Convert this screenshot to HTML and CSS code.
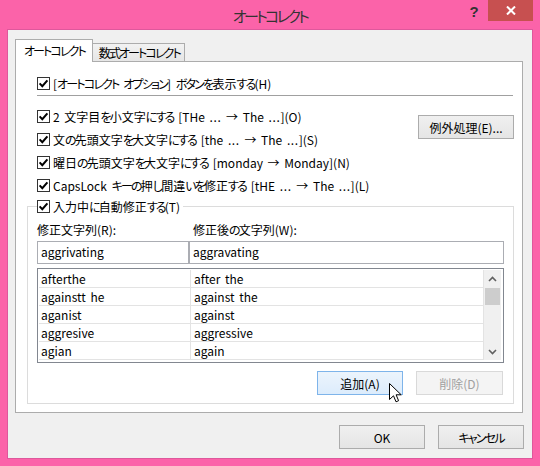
FILE: index.html
```html
<!DOCTYPE html>
<html lang="ja">
<head>
<meta charset="utf-8">
<title>オートコレクト</title>
<link rel="stylesheet" href="styles.css">
</head>
<body>
<div class="window">
  <div class="titlebar">
    <div class="title">オートコレクト</div>
    <div class="controls">
      <div class="help">?</div>
      <div class="close"><svg width="10" height="9" viewBox="0 0 10 9"><path d="M1 0.5L9 8.5M9 0.5L1 8.5" stroke="#fff" stroke-width="2"/></svg></div>
    </div>
  </div>
  <div class="client">
    <div class="tabs">
      <div class="tab active">オートコレクト</div>
      <div class="tab">数式オートコレクト</div>
    </div>
    <div class="panel">
      <div class="check-row"><span class="cb"><svg width="11" height="11" viewBox="0 0 11 11"><path d="M1.6 5.4L4.3 8.2L9.4 2.3" fill="none" stroke="#000" stroke-width="2"/></svg></span><span>[<span class="k">オートコレクト</span> <span class="k">オプション</span>] <span class="k">ボタンを</span>表示<span class="k">する</span>(H)</span></div>
      <div class="sep"></div>
      <div class="opts">
        <div class="opt-list">
          <div class="check-row"><span class="cb"><svg width="11" height="11" viewBox="0 0 11 11"><path d="M1.6 5.4L4.3 8.2L9.4 2.3" fill="none" stroke="#000" stroke-width="2"/></svg></span><span>2 文字目<span class="k">を</span>小文字<span class="k">にする</span> [THe <span class="dots">...</span> → The <span class="dots">...</span>](O)</span></div>
          <div class="check-row"><span class="cb"><svg width="11" height="11" viewBox="0 0 11 11"><path d="M1.6 5.4L4.3 8.2L9.4 2.3" fill="none" stroke="#000" stroke-width="2"/></svg></span><span>文<span class="k">の</span>先頭文字<span class="k">を</span>大文字<span class="k">にする</span> [the <span class="dots">...</span> → The <span class="dots">...</span>](S)</span></div>
          <div class="check-row"><span class="cb"><svg width="11" height="11" viewBox="0 0 11 11"><path d="M1.6 5.4L4.3 8.2L9.4 2.3" fill="none" stroke="#000" stroke-width="2"/></svg></span><span>曜日<span class="k">の</span>先頭文字<span class="k">を</span>大文字<span class="k">にする</span> [monday → Monday](N)</span></div>
          <div class="check-row"><span class="cb"><svg width="11" height="11" viewBox="0 0 11 11"><path d="M1.6 5.4L4.3 8.2L9.4 2.3" fill="none" stroke="#000" stroke-width="2"/></svg></span><span>CapsLock <span class="k">キーの</span>押<span class="k">し</span>間違<span class="k">いを</span>修正<span class="k">する</span> [tHE <span class="dots">...</span> → The <span class="dots">...</span>](L)</span></div>
        </div>
        <div class="btn exc">例外処理(E)...</div>
      </div>
      <fieldset class="group">
        <legend class="legend"><span class="cb"><svg width="11" height="11" viewBox="0 0 11 11"><path d="M1.6 5.4L4.3 8.2L9.4 2.3" fill="none" stroke="#000" stroke-width="2"/></svg></span><span>入力中<span class="k">に</span>自動修正<span class="k">する</span>(T)</span></legend>
        <div class="labels">
          <div class="lab1">修正文字列(R):</div>
          <div class="lab2">修正後<span class="k">の</span>文字列(W):</div>
        </div>
        <div class="inputs">
          <div class="field f1">aggrivating</div>
          <div class="field f2">aggravating</div>
        </div>
        <div class="list">
          <div class="rows">
            <div class="r"><span>afterthe</span><span>after the</span></div>
            <div class="r"><span>againstt he</span><span>against the</span></div>
            <div class="r"><span>aganist</span><span>against</span></div>
            <div class="r"><span>aggresive</span><span>aggressive</span></div>
            <div class="r"><span>agian</span><span>again</span></div>
          </div>
          <div class="scroll">
            <div class="arrow"><svg width="9" height="6" viewBox="0 0 9 6"><path d="M1 5L4.5 1.5L8 5" fill="none" stroke="#606060" stroke-width="1.6"/></svg></div>
            <div class="thumb"></div>
            <div class="track"></div>
            <div class="arrow"><svg width="9" height="6" viewBox="0 0 9 6"><path d="M1 1L4.5 4.5L8 1" fill="none" stroke="#606060" stroke-width="1.6"/></svg></div>
          </div>
        </div>
        <div class="list-btns">
          <div class="btn add">追加(A)<svg class="cursor" width="13" height="20" viewBox="0 0 13 20"><path d="M0.5 0.5V16.5L4.5 12.8L7 18.8L9.6 17.7L7.1 11.8H12.2Z" fill="#fff" stroke="#000" stroke-width="1" stroke-linejoin="miter"/></svg></div>
          <div class="btn del">削除(D)</div>
        </div>
      </fieldset>
    </div>
    <div class="footer">
      <div class="btn ok">OK</div>
      <div class="btn cancel"><span class="k">キャンセル</span></div>
    </div>
  </div>
</div>
</body>
</html>
```
FILE: styles.css
```css
* { box-sizing: border-box; }
html, body { margin: 0; padding: 0; }
body {
  width: 540px;
  height: 466px;
  overflow: hidden;
  font-family: "Noto Sans CJK JP", sans-serif;
  font-size: 12px;
  color: #000;
  font-feature-settings: "palt";
  word-spacing: 2px;
}
.k { letter-spacing: -1.8px; }
.dots { letter-spacing: 0.6px; }
.window {
  width: 540px;
  height: 466px;
  background: #fb63a9;
  display: flex;
  flex-direction: column;
}
.titlebar {
  height: 30px;
  flex: none;
  display: grid;
  grid-template-columns: 1fr auto 1fr;
  align-items: start;
}
.title {
  grid-column: 2;
  font-size: 15px;
  color: #333;
  line-height: 30px;
  padding-top: 1px;
  letter-spacing: -2.6px;
}
.controls {
  grid-column: 3;
  justify-self: end;
  display: flex;
  margin-right: 7px;
}
.help {
  width: 28px;
  height: 21px;
  font-family: "Liberation Sans", sans-serif;
  font-weight: bold;
  font-size: 15px;
  line-height: 23px;
  text-align: center;
  color: #333;
}
.close {
  width: 45px;
  height: 21px;
  background: #c75050;
  display: flex;
  align-items: center;
  justify-content: center;
}
.client {
  flex: 1;
  margin: 0 8px 8px;
  background: #f0f0f0;
  padding: 9px 8px 0 7px;
  box-shadow: 0 0 0 1px #de589c;
}
.tabs {
  display: flex;
  align-items: flex-end;
  height: 22px;
}
.tab {
  height: 18px;
  padding: 0 4px 0 6px;
  border: 1px solid #acacac;
  border-bottom: none;
  background: linear-gradient(#f2f2f2, #e6e6e6);
  line-height: 18px;
  margin-left: -1px;
  white-space: nowrap;
  letter-spacing: -1.9px;
}
.tab.active {
  height: 23px;
  margin-left: 0;
  margin-bottom: -1px;
  padding: 0 7px 0 8px;
  background: #fff;
  line-height: 21px;
  position: relative;
  z-index: 1;
}
.panel {
  height: 352px;
  margin-right: 1px;
  background: #fff;
  border: 1px solid #acacac;
  padding-top: 12px;
}
.check-row {
  display: flex;
  align-items: center;
  gap: 3px;
  height: 18px;
  margin-left: 21px;
  white-space: nowrap;
}
.cb {
  width: 13px;
  height: 13px;
  flex: none;
  border: 1px solid #333;
  background: #fff;
  display: flex;
}
.sep {
  height: 1px;
  background: #a0a0a0;
  margin: 3px 9px 0 21px;
}
.opts {
  display: flex;
  justify-content: space-between;
  align-items: flex-start;
  margin: 9px 8px 0 0;
}
.opt-list .check-row { height: 23px; }
.btn {
  height: 24px;
  border: 1px solid #acacac;
  background: linear-gradient(#f0f0f0, #e5e5e5);
  display: flex;
  align-items: center;
  justify-content: center;
  white-space: nowrap;
}
.exc {
  width: 96px;
  margin-top: 10px;
}
.group {
  margin: 0 8px 0 11px;
  border: 1px solid #dcdcdc;
  padding: 0 9px 8px 9px;
  min-width: 0;
}
.legend {
  padding: 0 3px 0 0;
  height: 18px;
  display: flex;
  align-items: center;
  gap: 3px;
  white-space: nowrap;
}
.labels {
  display: flex;
  height: 18px;
  margin-top: 6px;
  line-height: 18px;
}
.lab1 { width: 152px; }
.lab2 { padding-left: 4px; }
.inputs {
  display: flex;
  margin-top: 2px;
}
.field {
  height: 23px;
  border: 1px solid #abadb3;
  padding-left: 3px;
  line-height: 20px;
}
.f1 { width: 152px; }
.f2 { flex: 1; }
.list {
  height: 95px;
  margin-top: 4px;
  border: 1px solid #828790;
  padding: 1px 2px 1px 1px;
  display: flex;
  align-items: flex-start;
  background: #fff;
}
.rows {
  flex: 1;
  border-right: 1px solid #e3e3e3;
}
.r {
  display: grid;
  grid-template-columns: 152px 1fr;
  height: 18px;
  border-bottom: 1px solid #e3e3e3;
}
.r span {
  padding-left: 2px;
  line-height: 17px;
}
.r span:first-child { border-right: 1px solid #e3e3e3; }
.r span:last-child { padding-left: 3px; }
.scroll {
  width: 17px;
  height: 90px;
  background: #f0f0f0;
  display: flex;
  flex-direction: column;
}
.arrow {
  height: 17px;
  display: flex;
  align-items: center;
  justify-content: center;
}
.thumb {
  height: 17px;
  margin: 1px 1px 0;
  background: #cdcdcd;
}
.track { flex: 1; }
.list-btns {
  display: flex;
  justify-content: flex-end;
  gap: 13px;
  margin: 8px 1px 0 0;
}
.add {
  width: 86px;
  position: relative;
  background: linear-gradient(#ecf4fc, #dcecfc);
  border-color: #7eb4ea;
}
.cursor {
  position: absolute;
  left: 71px;
  top: 11px;
}
.del {
  width: 87px;
  background: #f4f4f4;
  border-color: #d9d9d9;
  color: #a0a0a0;
}
.footer {
  display: flex;
  justify-content: flex-end;
  gap: 13px;
  margin-top: 12px;
}
.ok, .cancel { width: 86px; }
```
